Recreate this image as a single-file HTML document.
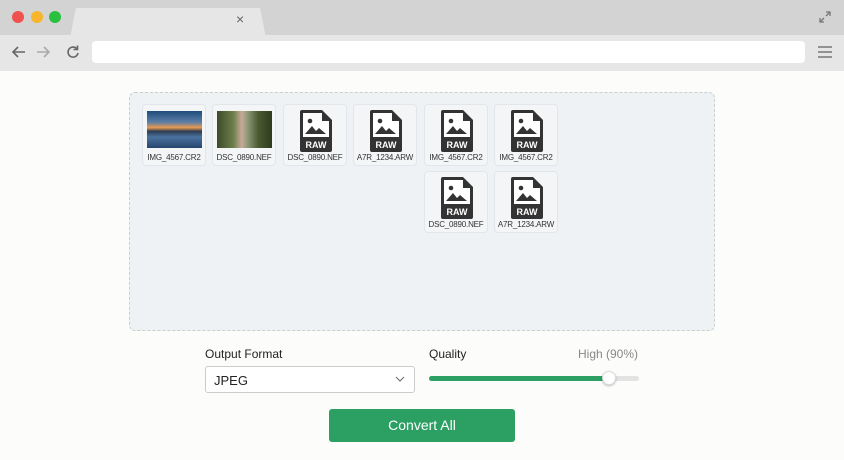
<!DOCTYPE html>
<html><head><style>
*{margin:0;padding:0;box-sizing:border-box}
body{width:844px;height:460px;overflow:hidden;background:#fcfcfa;font-family:"Liberation Sans",sans-serif;position:relative}
.abs{position:absolute}
.top{left:0;top:0;width:844px;height:36px;background:#d3d3d3}
.tab{left:70px;top:8px;width:196px;height:30px;background:#e6e6e6;border-radius:8px 8px 0 0;clip-path:polygon(3% 0,97% 0,100% 100%,0 100%)}
.bar{left:0;top:35px;width:844px;height:36px;background:#e6e6e6}
.addr{left:92px;top:41px;width:713px;height:22px;background:#fff;border-radius:4px}
.dot{width:12px;height:12px;border-radius:50%;top:11px}
.drop{left:129px;top:92px;width:586px;height:239px;background:#eff2f4;border:1px dashed #c9d0c9;border-radius:6px}
.tile{width:64px;height:62px;background:#f3f5f7;border:1px solid #e2e6ea;border-radius:4px}
.tile .lbl{position:absolute;left:0;right:0;top:48px;text-align:center;font-size:8px;color:#333;letter-spacing:-0.2px}
.tile svg{position:absolute;left:16px;top:5px}
.photo{position:absolute;left:4px;top:6px;width:55px;height:37px}
</style></head><body>
<div class="abs top"></div>
<div class="abs tab"></div>
<div class="abs dot" style="left:12px;background:#f0514e"></div>
<div class="abs dot" style="left:31px;background:#f6b52a"></div>
<div class="abs dot" style="left:49px;background:#27c13d"></div>
<div class="abs" style="left:236px;top:11px;font-size:14px;color:#666">×</div>
<svg class="abs" style="left:818px;top:10px" width="14" height="14" viewBox="0 0 14 14" fill="none" stroke="#777" stroke-width="1.3"><path d="M8 2h4v4M12 2L8 6M6 12H2V8M2 12l4-4"/></svg>
<div class="abs bar"></div>
<div class="abs addr"></div>
<svg class="abs" style="left:10px;top:44px" width="80" height="16" viewBox="0 0 80 16" fill="none" stroke-width="1.6"><path d="M15 8H3M8 3L3 8l5 5" stroke="#666"/><path d="M27 8h12M34 3l5 5-5 5" stroke="#aaa"/><path d="M67 5a5 5 0 1 0 1 4" stroke="#666"/><path d="M63.5 4.5h4v-4" stroke="#666" transform="translate(0,1)"/></svg>
<svg class="abs" style="left:818px;top:46px" width="14" height="12" viewBox="0 0 14 12" stroke="#777" stroke-width="1.6"><path d="M0 1h14M0 6h14M0 11h14"/></svg>

<div class="abs drop"></div>

<div class="abs tile" style="left:142px;top:104px"><div class="photo" style="background:linear-gradient(180deg,#1e4c7a 0%,#5b7ea6 30%,#e89a50 45%,#2c3c52 55%,#4b73a0 70%,#26466e 100%)"></div><div class="lbl">IMG_4567.CR2</div></div>
<div class="abs tile" style="left:212px;top:104px"><div class="photo" style="background:linear-gradient(90deg,#3c4b2a,#6d7f4a 30%,#c9a99a 45%,#8f9a7a 55%,#4a5a30 75%,#2e3a1e)"></div><div class="lbl">DSC_0890.NEF</div></div>

<div class="abs tile" style="left:283px;top:104px"><svg width="32" height="42" viewBox="0 0 32 42"><path d="M2 0h20l10 10v30a2 2 0 0 1-2 2H2a2 2 0 0 1-2-2V2a2 2 0 0 1 2-2z" fill="#333"/><rect x="3" y="3" width="19" height="24" fill="#fff"/><rect x="22" y="11" width="7" height="16" fill="#fff"/><circle cx="10" cy="11" r="2.3" fill="#333"/><path d="M5 24l7-8 4 5 3-3 7 6z" fill="#333"/><text x="16" y="38" font-size="9" font-weight="bold" fill="#fff" text-anchor="middle" font-family="Liberation Sans">RAW</text></svg><div class="lbl">DSC_0890.NEF</div></div>
<div class="abs tile" style="left:353px;top:104px"><svg width="32" height="42" viewBox="0 0 32 42"><path d="M2 0h20l10 10v30a2 2 0 0 1-2 2H2a2 2 0 0 1-2-2V2a2 2 0 0 1 2-2z" fill="#333"/><rect x="3" y="3" width="19" height="24" fill="#fff"/><rect x="22" y="11" width="7" height="16" fill="#fff"/><circle cx="10" cy="11" r="2.3" fill="#333"/><path d="M5 24l7-8 4 5 3-3 7 6z" fill="#333"/><text x="16" y="38" font-size="9" font-weight="bold" fill="#fff" text-anchor="middle" font-family="Liberation Sans">RAW</text></svg><div class="lbl">A7R_1234.ARW</div></div>
<div class="abs tile" style="left:424px;top:104px"><svg width="32" height="42" viewBox="0 0 32 42"><path d="M2 0h20l10 10v30a2 2 0 0 1-2 2H2a2 2 0 0 1-2-2V2a2 2 0 0 1 2-2z" fill="#333"/><rect x="3" y="3" width="19" height="24" fill="#fff"/><rect x="22" y="11" width="7" height="16" fill="#fff"/><circle cx="10" cy="11" r="2.3" fill="#333"/><path d="M5 24l7-8 4 5 3-3 7 6z" fill="#333"/><text x="16" y="38" font-size="9" font-weight="bold" fill="#fff" text-anchor="middle" font-family="Liberation Sans">RAW</text></svg><div class="lbl">IMG_4567.CR2</div></div>
<div class="abs tile" style="left:494px;top:104px"><svg width="32" height="42" viewBox="0 0 32 42"><path d="M2 0h20l10 10v30a2 2 0 0 1-2 2H2a2 2 0 0 1-2-2V2a2 2 0 0 1 2-2z" fill="#333"/><rect x="3" y="3" width="19" height="24" fill="#fff"/><rect x="22" y="11" width="7" height="16" fill="#fff"/><circle cx="10" cy="11" r="2.3" fill="#333"/><path d="M5 24l7-8 4 5 3-3 7 6z" fill="#333"/><text x="16" y="38" font-size="9" font-weight="bold" fill="#fff" text-anchor="middle" font-family="Liberation Sans">RAW</text></svg><div class="lbl">IMG_4567.CR2</div></div>
<div class="abs tile" style="left:424px;top:171px"><svg width="32" height="42" viewBox="0 0 32 42"><path d="M2 0h20l10 10v30a2 2 0 0 1-2 2H2a2 2 0 0 1-2-2V2a2 2 0 0 1 2-2z" fill="#333"/><rect x="3" y="3" width="19" height="24" fill="#fff"/><rect x="22" y="11" width="7" height="16" fill="#fff"/><circle cx="10" cy="11" r="2.3" fill="#333"/><path d="M5 24l7-8 4 5 3-3 7 6z" fill="#333"/><text x="16" y="38" font-size="9" font-weight="bold" fill="#fff" text-anchor="middle" font-family="Liberation Sans">RAW</text></svg><div class="lbl">DSC_0890.NEF</div></div>
<div class="abs tile" style="left:494px;top:171px"><svg width="32" height="42" viewBox="0 0 32 42"><path d="M2 0h20l10 10v30a2 2 0 0 1-2 2H2a2 2 0 0 1-2-2V2a2 2 0 0 1 2-2z" fill="#333"/><rect x="3" y="3" width="19" height="24" fill="#fff"/><rect x="22" y="11" width="7" height="16" fill="#fff"/><circle cx="10" cy="11" r="2.3" fill="#333"/><path d="M5 24l7-8 4 5 3-3 7 6z" fill="#333"/><text x="16" y="38" font-size="9" font-weight="bold" fill="#fff" text-anchor="middle" font-family="Liberation Sans">RAW</text></svg><div class="lbl">A7R_1234.ARW</div></div>

<div class="abs" style="left:205px;top:347px;font-size:12px;color:#222">Output Format</div>
<div class="abs" style="left:205px;top:366px;width:210px;height:27px;background:#fff;border:1px solid #ccc;border-radius:3px;font-size:13px;color:#222;padding:6px 0 0 8px">JPEG</div>
<svg class="abs" style="left:395px;top:376px" width="10" height="7" viewBox="0 0 10 7" fill="none" stroke="#777" stroke-width="1.2"><path d="M1 1l4 4 4-4"/></svg>
<div class="abs" style="left:429px;top:347px;font-size:12px;color:#222">Quality</div>
<div class="abs" style="left:578px;top:347px;font-size:12px;color:#888">High (90%)</div>
<div class="abs" style="left:429px;top:376px;width:210px;height:5px;background:#e3e3e3;border-radius:3px"></div>
<div class="abs" style="left:429px;top:376px;width:180px;height:5px;background:#2ba062;border-radius:3px"></div>
<div class="abs" style="left:602px;top:371px;width:14px;height:14px;background:#fff;border:1px solid #ddd;border-radius:50%;box-shadow:0 1px 2px rgba(0,0,0,.25)"></div>
<div class="abs" style="left:329px;top:409px;width:186px;height:33px;background:#2ba062;border-radius:3px;color:#fff;font-size:14px;text-align:center;line-height:33px">Convert All</div>
</body></html>
